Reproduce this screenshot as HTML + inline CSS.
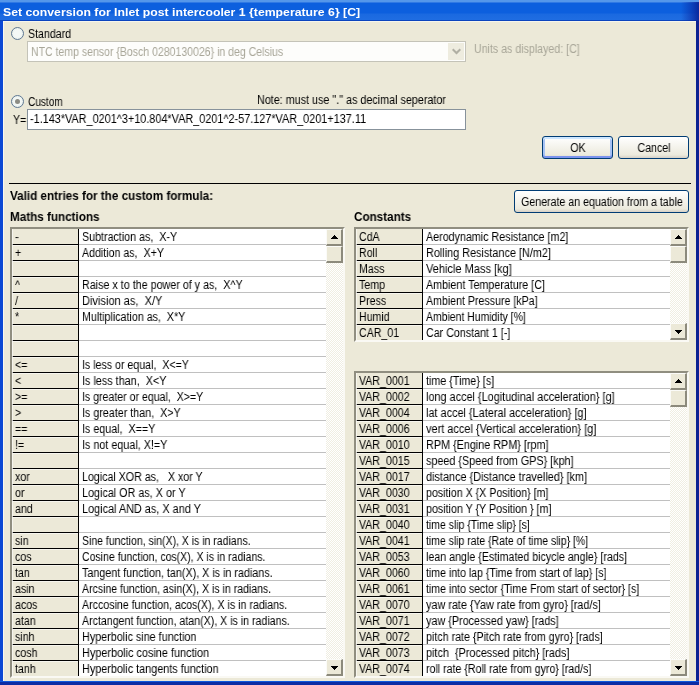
<!DOCTYPE html>
<html><head><meta charset="utf-8"><title>Set conversion</title>
<style>
html,body{margin:0;padding:0}
body{width:699px;height:685px;overflow:hidden;background:#ECE9D8;position:relative;font-family:"Liberation Sans",sans-serif;font-size:12px;color:#000}
.abs{position:absolute}
#root{position:absolute;left:0;top:0;width:699px;height:685px}
.t{will-change:transform;display:inline-block;white-space:pre;transform-origin:0 0;transform:scaleX(.885);line-height:14px}
.b{font-weight:bold;transform:scaleX(.973)}
#title{left:0;top:0;width:699px;height:21px;background:linear-gradient(#5597EA 0,#5597EA 2px,#3079E4 2px,#3079E4 3px,#0C5FDE 3px,#0C5FDE 13px,#1A69E0 14px,#1F6DE2 20px,#0B44BE 20px,#0B44BE 21px)}
#title::after{content:"";position:absolute;right:0;top:2px;width:18px;height:19px;background:linear-gradient(90deg,rgba(10,40,160,0) 0,rgba(10,40,160,.55) 60%,rgba(10,34,150,.9) 100%)}
#title span{position:absolute;left:3px;top:5px;color:#fff;font-weight:bold;font-size:11px;line-height:14px;white-space:pre;transform-origin:0 0;transform:scaleX(1.115);will-change:transform}
#tl{left:3px;top:21px;width:693px;height:1px;background:#F6F5EC}
#bl{left:0;top:21px;width:3px;height:664px;background:#0C48D4;border-right:1px solid #F8F7F0}
#br{left:696px;top:21px;width:3px;height:664px;background:#0D2293}
#bb{left:0;top:681px;width:699px;height:4px;background:linear-gradient(#0F58DC 0,#0F58DC 1px,#0B2CA4 1px,#0B2CA4 4px)}
.radio{width:11px;height:11px;border:1px solid #5F7893;border-radius:50%;background:radial-gradient(circle at 50% 50%,#F4F8F6 45%,#DCE6E0 100%)}
.radio.on::after{content:"";position:absolute;left:3px;top:3px;width:5px;height:5px;border-radius:50%;background:#8C8C84}
.combo{left:27px;top:41px;width:437px;height:19px;border:1px solid #C4C3B8;background:#FDFDFB}
.combo .arrow{position:absolute;right:1px;top:1px;width:16px;height:17px;background:#EEECDF}
.combo .arrow svg{position:absolute;left:4px;top:5px}
.gray{color:#A8A698}
.input{left:27px;top:109px;width:437px;height:19px;border:1px solid #87929B;background:#fff}
.btn{height:21px;border:1px solid #003C74;border-radius:3px;background:linear-gradient(#fff 0,#F6F5EF 40%,#ECEADD 85%,#D6D0C5 100%);text-align:center}
.btn.def{box-shadow:inset 0 2px 0 #CEE7FF,inset 0 -2px 0 #7B93EE,inset 2px 0 0 #A6C2F4,inset -2px 0 0 #A6C2F4}
.btn .t{position:absolute;left:50%;top:4px;transform-origin:0 0;transform:scaleX(.885) translateX(-50%)}
#hr{left:9px;top:183px;width:682px;height:1px;background:#000}
.grid{position:absolute;border:2px solid;border-color:#908E80 #FAF9F4 #FAF9F4 #908E80;background:#fff;overflow:hidden}
.fix{position:absolute;left:0;top:0;width:66px;background:#ECE9D8;border-right:1px solid #000;border-left:1px solid #F6F5EE;box-sizing:content-box;width:65px}
.row{position:absolute;left:0;height:15px;border-bottom:1px solid #C0C0C0}
.row::before{content:"";position:absolute;left:1px;bottom:-1px;width:66px;height:1px;background:#000;z-index:1}
.row::after{content:"";position:absolute;left:1px;bottom:-2px;width:65px;height:1px;background:#F6F5EE;z-index:1}
.c1{position:absolute;left:3px;top:1px}
.c2{position:absolute;left:70px;top:1px}
.sb{position:absolute;top:0;width:17px;background:repeating-conic-gradient(#fff 0 25%,#F0EEE2 0 50%) 0 0/2px 2px}
.sbtn{position:absolute;left:0;width:14px;height:14px;background:#ECE9D8;border:solid;border-width:1px 2px 2px 1px;border-color:#FBFBF8 #8C8A7C #8C8A7C #FBFBF8}
.sbtn.up{top:0}
.sbtn.thumb{top:17px}
.sbtn.dn{bottom:0}
.sbtn svg{position:absolute;left:4px;top:5px}
.sbtn.dn svg{top:6px}
</style></head>
<body>
<div id="title" class="abs"><span>Set conversion for Inlet post intercooler 1 {temperature 6} [C]</span></div>
<div id="tl" class="abs"></div><div id="bl" class="abs"></div><div id="br" class="abs"></div><div id="bb" class="abs"></div>
<div class="abs radio" style="left:11px;top:27px"></div>
<span class="abs t" style="left:28px;top:27px">Standard</span>
<div class="abs combo"><span class="abs t gray" style="left:3px;top:3px;transform:scaleX(.877)">NTC temp sensor {Bosch 0280130026} in deg Celsius</span><div class="arrow"><svg width="9" height="7" viewBox="0 0 9 7"><path d="M0.7 1.2 L4.5 5 L8.3 1.2" fill="none" stroke="#B0AFA4" stroke-width="2"/></svg></div></div>
<span class="abs t gray" style="left:474px;top:42px">Units as displayed: [C]</span>
<div class="abs radio on" style="left:11px;top:95px"></div>
<span class="abs t" style="left:28px;top:95px;transform:scaleX(.84)">Custom</span>
<span class="abs t" style="left:257px;top:93px;transform:scaleX(.897)">Note: must use "." as decimal seperator</span>
<span class="abs t" style="left:13px;top:113px">Y=</span>
<div class="abs input"><span class="abs t" style="left:2px;top:2px;transform:scaleX(.905)">-1.143*VAR_0201^3+10.804*VAR_0201^2-57.127*VAR_0201+137.11</span></div>
<div class="abs btn def" style="left:542px;top:136px;width:69px"><span class="t">OK</span></div>
<div class="abs btn" style="left:618px;top:136px;width:69px"><span class="t">Cancel</span></div>
<div id="hr" class="abs"></div>
<span class="abs t b" style="left:10px;top:189px">Valid entries for the custom formula:</span>
<div class="abs btn" style="left:514px;top:190px;width:173px"><span class="t">Generate an equation from a table</span></div>
<span class="abs t b" style="left:10px;top:210px">Maths functions</span>
<span class="abs t b" style="left:354px;top:210px">Constants</span>
<div class="grid" style="left:10px;top:227px;width:331px;height:447px">
<div class="fix" style="height:447px"></div>
<div class="row" style="top:0px;width:314px"><span class="c1 t">-</span><span class="c2 t" style="transform:scaleX(0.891)">Subtraction as,  X-Y</span></div>
<div class="row" style="top:16px;width:314px"><span class="c1 t">+</span><span class="c2 t" style="transform:scaleX(0.886)">Addition as,  X+Y</span></div>
<div class="row" style="top:32px;width:314px"><span class="c1 t"></span><span class="c2 t"></span></div>
<div class="row" style="top:48px;width:314px"><span class="c1 t">^</span><span class="c2 t" style="transform:scaleX(0.894)">Raise x to the power of y as,  X^Y</span></div>
<div class="row" style="top:64px;width:314px"><span class="c1 t">/</span><span class="c2 t" style="transform:scaleX(0.921)">Division as,  X/Y</span></div>
<div class="row" style="top:80px;width:314px"><span class="c1 t">*</span><span class="c2 t" style="transform:scaleX(0.890)">Multiplication as,  X*Y</span></div>
<div class="row" style="top:96px;width:314px"><span class="c1 t"></span><span class="c2 t"></span></div>
<div class="row" style="top:112px;width:314px"><span class="c1 t"></span><span class="c2 t"></span></div>
<div class="row" style="top:128px;width:314px"><span class="c1 t">&lt;=</span><span class="c2 t" style="transform:scaleX(0.885)">Is less or equal,  X&lt;=Y</span></div>
<div class="row" style="top:144px;width:314px"><span class="c1 t">&lt;</span><span class="c2 t" style="transform:scaleX(0.901)">Is less than,  X&lt;Y</span></div>
<div class="row" style="top:160px;width:314px"><span class="c1 t">&gt;=</span><span class="c2 t" style="transform:scaleX(0.881)">Is greater or equal,  X&gt;=Y</span></div>
<div class="row" style="top:176px;width:314px"><span class="c1 t">&gt;</span><span class="c2 t" style="transform:scaleX(0.893)">Is greater than,  X&gt;Y</span></div>
<div class="row" style="top:192px;width:314px"><span class="c1 t">==</span><span class="c2 t" style="transform:scaleX(0.894)">Is equal,  X==Y</span></div>
<div class="row" style="top:208px;width:314px"><span class="c1 t">!=</span><span class="c2 t" style="transform:scaleX(0.898)">Is not equal, X!=Y</span></div>
<div class="row" style="top:224px;width:314px"><span class="c1 t"></span><span class="c2 t"></span></div>
<div class="row" style="top:240px;width:314px"><span class="c1 t">xor</span><span class="c2 t" style="transform:scaleX(0.888)">Logical XOR as,   X xor Y</span></div>
<div class="row" style="top:256px;width:314px"><span class="c1 t">or</span><span class="c2 t" style="transform:scaleX(0.899)">Logical OR as, X or Y</span></div>
<div class="row" style="top:272px;width:314px"><span class="c1 t">and</span><span class="c2 t" style="transform:scaleX(0.906)">Logical AND as, X and Y</span></div>
<div class="row" style="top:288px;width:314px"><span class="c1 t"></span><span class="c2 t"></span></div>
<div class="row" style="top:304px;width:314px"><span class="c1 t">sin</span><span class="c2 t" style="transform:scaleX(0.875)">Sine function, sin(X), X is in radians.</span></div>
<div class="row" style="top:320px;width:314px"><span class="c1 t">cos</span><span class="c2 t" style="transform:scaleX(0.876)">Cosine function, cos(X), X is in radians.</span></div>
<div class="row" style="top:336px;width:314px"><span class="c1 t">tan</span><span class="c2 t" style="transform:scaleX(0.896)">Tangent function, tan(X), X is in radians.</span></div>
<div class="row" style="top:352px;width:314px"><span class="c1 t">asin</span><span class="c2 t" style="transform:scaleX(0.878)">Arcsine function, asin(X), X is in radians.</span></div>
<div class="row" style="top:368px;width:314px"><span class="c1 t">acos</span><span class="c2 t" style="transform:scaleX(0.887)">Arccosine function, acos(X), X is in radians.</span></div>
<div class="row" style="top:384px;width:314px"><span class="c1 t">atan</span><span class="c2 t" style="transform:scaleX(0.885)">Arctangent function, atan(X), X is in radians.</span></div>
<div class="row" style="top:400px;width:314px"><span class="c1 t">sinh</span><span class="c2 t" style="transform:scaleX(0.898)">Hyperbolic sine function</span></div>
<div class="row" style="top:416px;width:314px"><span class="c1 t">cosh</span><span class="c2 t" style="transform:scaleX(0.907)">Hyperbolic cosine function</span></div>
<div class="row" style="top:432px;width:314px"><span class="c1 t">tanh</span><span class="c2 t" style="transform:scaleX(0.902)">Hyperbolic tangents function</span></div>
<div class="sb" style="left:314px;height:447px"><div class="sbtn up"><svg width="7" height="4" viewBox="0 0 7 4" shape-rendering="crispEdges"><path d="M3 0h1v1h1v1h1v1h1v1h-7v-1h1v-1h1v-1h1z" fill="#000"/></svg></div><div class="sbtn thumb"></div><div class="sbtn dn"><svg width="7" height="4" viewBox="0 0 7 4" shape-rendering="crispEdges"><path d="M0 0h7v1h-1v1h-1v1h-1v1h-1v-1h-1v-1h-1v-1h-1z" fill="#000"/></svg></div></div>
</div>
<div class="grid" style="left:354px;top:227px;width:331px;height:111px">
<div class="fix" style="height:111px"></div>
<div class="row" style="top:0px;width:314px"><span class="c1 t">CdA</span><span class="c2 t" style="transform:scaleX(0.893)">Aerodynamic Resistance [m2]</span></div>
<div class="row" style="top:16px;width:314px"><span class="c1 t">Roll</span><span class="c2 t" style="transform:scaleX(0.905)">Rolling Resistance [N/m2]</span></div>
<div class="row" style="top:32px;width:314px"><span class="c1 t">Mass</span><span class="c2 t" style="transform:scaleX(0.919)">Vehicle Mass [kg]</span></div>
<div class="row" style="top:48px;width:314px"><span class="c1 t">Temp</span><span class="c2 t" style="transform:scaleX(0.893)">Ambient Temperature [C]</span></div>
<div class="row" style="top:64px;width:314px"><span class="c1 t">Press</span><span class="c2 t" style="transform:scaleX(0.885)">Ambient Pressure [kPa]</span></div>
<div class="row" style="top:80px;width:314px"><span class="c1 t">Humid</span><span class="c2 t" style="transform:scaleX(0.870)">Ambient Humidity [%]</span></div>
<div class="row" style="top:96px;width:314px"><span class="c1 t">CAR_01</span><span class="c2 t" style="transform:scaleX(0.890)">Car Constant 1 [-]</span></div>
<div class="sb" style="left:314px;height:111px"><div class="sbtn up"><svg width="7" height="4" viewBox="0 0 7 4" shape-rendering="crispEdges"><path d="M3 0h1v1h1v1h1v1h1v1h-7v-1h1v-1h1v-1h1z" fill="#000"/></svg></div><div class="sbtn thumb"></div><div class="sbtn dn"><svg width="7" height="4" viewBox="0 0 7 4" shape-rendering="crispEdges"><path d="M0 0h7v1h-1v1h-1v1h-1v1h-1v-1h-1v-1h-1v-1h-1z" fill="#000"/></svg></div></div>
</div>
<div class="grid" style="left:354px;top:371px;width:331px;height:303px">
<div class="fix" style="height:303px"></div>
<div class="row" style="top:0px;width:314px"><span class="c1 t">VAR_0001</span><span class="c2 t" style="transform:scaleX(0.894)">time {Time} [s]</span></div>
<div class="row" style="top:16px;width:314px"><span class="c1 t">VAR_0002</span><span class="c2 t" style="transform:scaleX(0.906)">long accel {Logitudinal acceleration} [g]</span></div>
<div class="row" style="top:32px;width:314px"><span class="c1 t">VAR_0004</span><span class="c2 t" style="transform:scaleX(0.908)">lat accel {Lateral acceleration} [g]</span></div>
<div class="row" style="top:48px;width:314px"><span class="c1 t">VAR_0006</span><span class="c2 t" style="transform:scaleX(0.912)">vert accel {Vertical acceleration} [g]</span></div>
<div class="row" style="top:64px;width:314px"><span class="c1 t">VAR_0010</span><span class="c2 t" style="transform:scaleX(0.900)">RPM {Engine RPM} [rpm]</span></div>
<div class="row" style="top:80px;width:314px"><span class="c1 t">VAR_0015</span><span class="c2 t" style="transform:scaleX(0.899)">speed {Speed from GPS} [kph]</span></div>
<div class="row" style="top:96px;width:314px"><span class="c1 t">VAR_0017</span><span class="c2 t" style="transform:scaleX(0.908)">distance {Distance travelled} [km]</span></div>
<div class="row" style="top:112px;width:314px"><span class="c1 t">VAR_0030</span><span class="c2 t" style="transform:scaleX(0.886)">position X {X Position} [m]</span></div>
<div class="row" style="top:128px;width:314px"><span class="c1 t">VAR_0031</span><span class="c2 t" style="transform:scaleX(0.891)">position Y {Y Position } [m]</span></div>
<div class="row" style="top:144px;width:314px"><span class="c1 t">VAR_0040</span><span class="c2 t" style="transform:scaleX(0.873)">time slip {Time slip} [s]</span></div>
<div class="row" style="top:160px;width:314px"><span class="c1 t">VAR_0041</span><span class="c2 t" style="transform:scaleX(0.871)">time slip rate {Rate of time slip} [%]</span></div>
<div class="row" style="top:176px;width:314px"><span class="c1 t">VAR_0053</span><span class="c2 t" style="transform:scaleX(0.889)">lean angle {Estimated bicycle angle} [rads]</span></div>
<div class="row" style="top:192px;width:314px"><span class="c1 t">VAR_0060</span><span class="c2 t" style="transform:scaleX(0.880)">time into lap {Time from start of lap} [s]</span></div>
<div class="row" style="top:208px;width:314px"><span class="c1 t">VAR_0061</span><span class="c2 t" style="transform:scaleX(0.880)">time into sector {Time From start of sector} [s]</span></div>
<div class="row" style="top:224px;width:314px"><span class="c1 t">VAR_0070</span><span class="c2 t" style="transform:scaleX(0.902)">yaw rate {Yaw rate from gyro} [rad/s]</span></div>
<div class="row" style="top:240px;width:314px"><span class="c1 t">VAR_0071</span><span class="c2 t" style="transform:scaleX(0.900)">yaw {Processed yaw} [rads]</span></div>
<div class="row" style="top:256px;width:314px"><span class="c1 t">VAR_0072</span><span class="c2 t" style="transform:scaleX(0.889)">pitch rate {Pitch rate from gyro} [rads]</span></div>
<div class="row" style="top:272px;width:314px"><span class="c1 t">VAR_0073</span><span class="c2 t" style="transform:scaleX(0.903)">pitch  {Processed pitch} [rads]</span></div>
<div class="row" style="top:288px;width:314px"><span class="c1 t">VAR_0074</span><span class="c2 t" style="transform:scaleX(0.885)">roll rate {Roll rate from gyro} [rad/s]</span></div>
<div class="sb" style="left:314px;height:303px"><div class="sbtn up"><svg width="7" height="4" viewBox="0 0 7 4" shape-rendering="crispEdges"><path d="M3 0h1v1h1v1h1v1h1v1h-7v-1h1v-1h1v-1h1z" fill="#000"/></svg></div><div class="sbtn thumb"></div><div class="sbtn dn"><svg width="7" height="4" viewBox="0 0 7 4" shape-rendering="crispEdges"><path d="M0 0h7v1h-1v1h-1v1h-1v1h-1v-1h-1v-1h-1v-1h-1z" fill="#000"/></svg></div></div>
</div>
</body></html>
